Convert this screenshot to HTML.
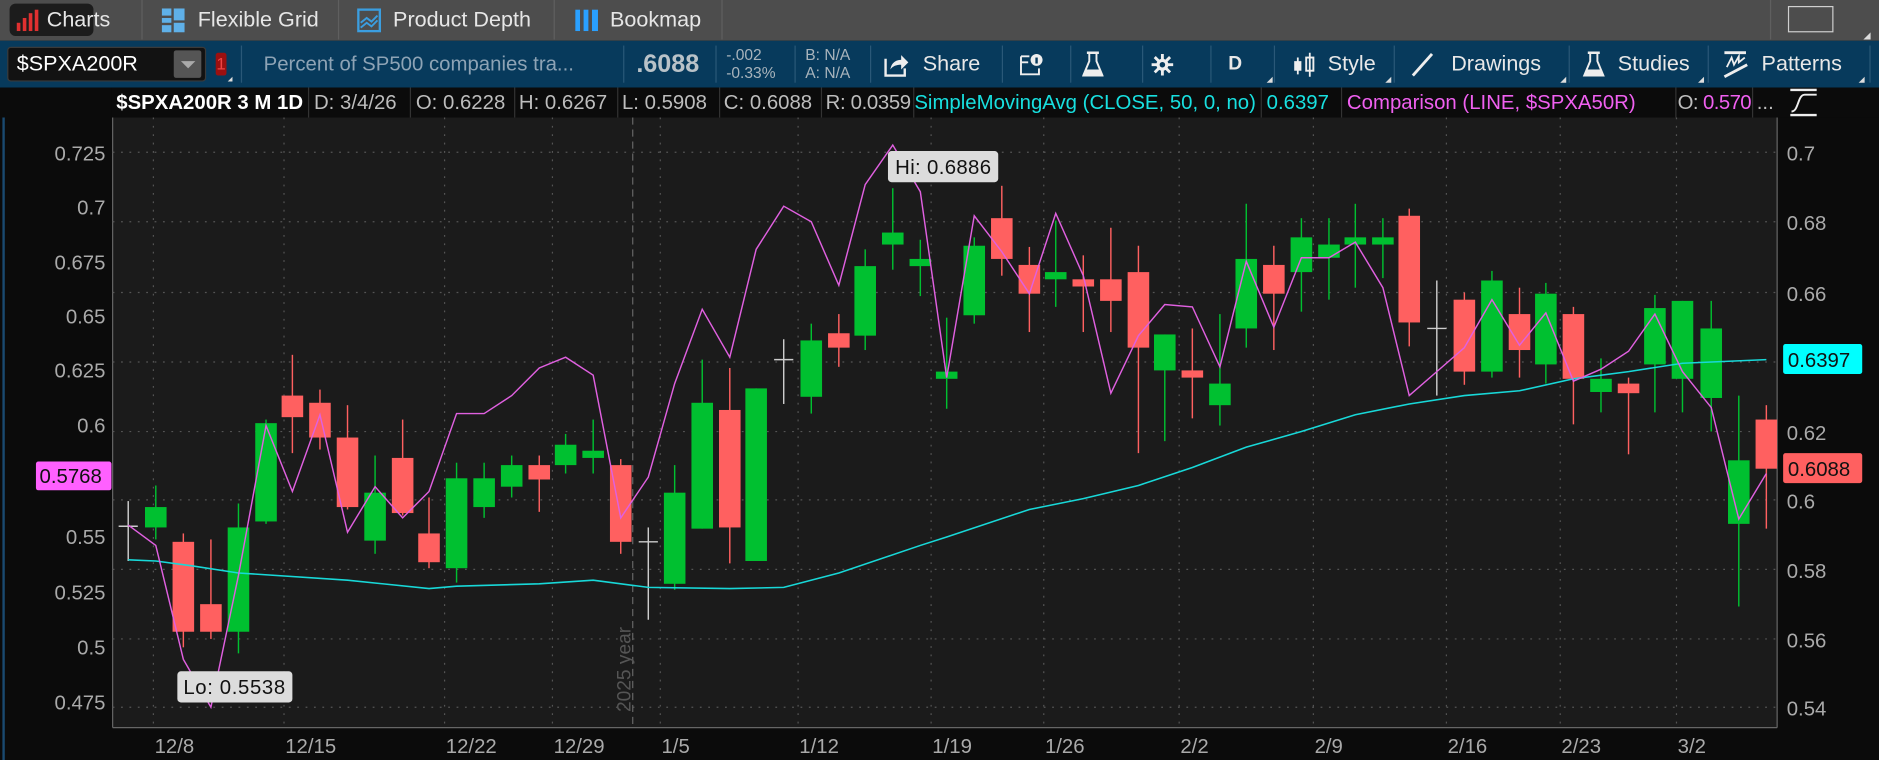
<!DOCTYPE html>
<html><head><meta charset="utf-8">
<style>
html,body{margin:0;padding:0;background:#0b0b0b;overflow:hidden;width:1879px;height:760px}
#w{position:absolute;left:0;top:0;width:1568px;height:634px;transform-origin:0 0;transform:scale(1.19834,1.19874);font-family:"Liberation Sans",sans-serif;}
.a{position:absolute;white-space:nowrap}
#tabs{position:absolute;left:0;top:0;width:1568px;height:34px;background:#4d4d4d}
.tab{position:absolute;top:0;height:33px;line-height:33px;color:#e6e6e6;font-size:18px}
.sep{position:absolute;top:0;width:1px;height:33px;background:#5f5f5f}
#tb{position:absolute;left:0;top:34px;width:1568px;height:39px;background:#073a5c}
.ts{position:absolute;top:4px;width:1px;height:31px;background:#2a5878}
.tt{position:absolute;top:0;height:39px;line-height:39px;color:#e8e8e8;font-size:18px;white-space:nowrap}
.corner{position:absolute;width:0;height:0;border-left:6px solid transparent;border-bottom:6px solid #ddd}
#info{position:absolute;left:93px;top:73px;width:1475px;height:25px;background:#0b0b0b;font-size:17px;line-height:25px}
.ic{position:absolute;top:0;height:25px;color:#bdbdbd;border-right:1px solid #333;padding-left:4px;white-space:nowrap;overflow:hidden}
</style></head><body>
<div id="w">
<div id="tabs">
  <div class="a" style="left:8px;top:3px;width:70px;height:27px;background:#1c1c1c;border-radius:5px"></div>
  <svg class="a" style="left:13px;top:8px" width="22" height="18"><rect x="1" y="11" width="3" height="7" fill="#e03030"/><rect x="6" y="7" width="3" height="11" fill="#e03030"/><rect x="11" y="3" width="3" height="15" fill="#e03030"/><rect x="16" y="0" width="3" height="18" fill="#e03030"/></svg>
  <div class="tab" style="left:39px">Charts</div>
  <div class="sep" style="left:118px"></div>
  <svg class="a" style="left:135px;top:7px" width="20" height="20"><rect x="0" y="0" width="8" height="6" fill="#5fb0e8"/><rect x="0" y="8" width="8" height="4" fill="#5fb0e8"/><rect x="0" y="14" width="8" height="6" fill="#5fb0e8"/><rect x="10" y="0" width="9" height="10" fill="#5fb0e8"/><rect x="10" y="12" width="9" height="8" fill="#5fb0e8"/></svg>
  <div class="tab" style="left:165px">Flexible Grid</div>
  <div class="sep" style="left:282px"></div>
  <svg class="a" style="left:298px;top:7px" width="20" height="20"><rect x="1" y="1" width="18" height="18" fill="none" stroke="#3b9ee0" stroke-width="2"/><path d="M3 12 L8 8 L12 11 L17 6 M3 16 L8 12 L12 15 L17 10" stroke="#3b9ee0" stroke-width="1.6" fill="none"/></svg>
  <div class="tab" style="left:328px">Product Depth</div>
  <div class="sep" style="left:462px"></div>
  <svg class="a" style="left:480px;top:8px" width="20" height="18"><rect x="0" y="0" width="4" height="18" fill="#2aa0ff"/><rect x="7" y="0" width="4" height="18" fill="#2aa0ff"/><rect x="14" y="0" width="5" height="18" fill="#2aa0ff"/></svg>
  <div class="tab" style="left:509px">Bookmap</div>
  <div class="sep" style="left:602px"></div>
  <div class="sep" style="left:1477px"></div>
  <div class="a" style="left:1492px;top:5px;width:38px;height:22px;border:1px solid #cfcfcf;box-sizing:border-box"></div>
  <div class="corner" style="left:1555px;top:27px"></div>
</div>
<div id="tb">
  <div class="a" style="left:6px;top:5px;width:166px;height:29px;background:#121212;border:1px solid #3a3a3a;border-radius:3px;box-sizing:border-box"></div>
  <div class="a" style="left:14px;top:5px;height:29px;line-height:29px;color:#fff;font-size:18px">$SPXA200R</div>
  <div class="a" style="left:145px;top:8px;width:23px;height:23px;background:#555;border-radius:2px"></div>
  <div class="a" style="left:151px;top:17px;width:0;height:0;border-left:6px solid transparent;border-right:6px solid transparent;border-top:6px solid #aaa"></div>
  <div class="a" style="left:180px;top:10px;width:9px;height:19px;background:#9b1010;border-radius:2px;color:#e44;font-size:14px;line-height:19px;text-align:center">1</div>
  <div class="corner" style="left:190px;top:30px;border-bottom-width:4px;border-left-width:4px"></div>
  <div class="ts" style="left:201px"></div>
  <div class="tt" style="left:220px;color:#8da3b5;font-size:17px">Percent of SP500 companies tra...</div>
  <div class="ts" style="left:520px"></div>
  <div class="tt" style="left:531px;color:#b9c2c8;font-size:21px;font-weight:bold">.6088</div>
  <div class="ts" style="left:597px"></div>
  <div class="a" style="left:606px;top:4px;color:#a9b4bc;font-size:13px;line-height:15px">-.002<br>-0.33%</div>
  <div class="ts" style="left:663px"></div>
  <div class="a" style="left:672px;top:4px;color:#a9b4bc;font-size:13px;line-height:15px">B: N/A<br>A: N/A</div>
  <div class="ts" style="left:726px"></div>
  <svg class="a" style="left:737px;top:9px" width="22" height="22"><path d="M2 6 V20 H18 V14" stroke="#eee" stroke-width="2" fill="none"/><path d="M6 15 C7 9 11 7 15 7 V3 L21 9 L15 15 V11 C11 11 8 12 6 15 Z" fill="#eee"/></svg>
  <div class="tt" style="left:770px">Share</div>
  <div class="ts" style="left:836px"></div>
  <svg class="a" style="left:850px;top:10px" width="22" height="20"><path d="M2 3 H9 M2 3 V18 H17 V13" stroke="#eee" stroke-width="1.6" fill="none"/><path d="M2 8 H8" stroke="#eee" stroke-width="1.6"/><circle cx="15" cy="6" r="5" fill="#eee"/><rect x="14" y="4" width="2" height="5" fill="#073a5c"/></svg>
  <div class="ts" style="left:893px"></div>
  <svg class="a" style="left:903px;top:8px" width="18" height="24"><path d="M6 2 V9 L1 21 H17 L12 9 V2" stroke="#eee" stroke-width="1.6" fill="none"/><path d="M4 2 H14" stroke="#eee" stroke-width="2"/><path d="M3 16 L15 16 L17 21 L1 21 Z" fill="#eee"/></svg>
  <div class="ts" style="left:953px"></div>
  <svg class="a" style="left:960px;top:10px" width="20" height="20" viewBox="0 0 20 20"><g stroke="#eee" stroke-width="2.4"><path d="M10 1 V19 M1 10 H19 M3.6 3.6 L16.4 16.4 M16.4 3.6 L3.6 16.4"/></g><circle cx="10" cy="10" r="5" fill="#eee"/><circle cx="10" cy="10" r="2.3" fill="#073a5c"/></svg>
  <div class="ts" style="left:1010px"></div>
  <div class="tt" style="left:1025px;font-weight:bold;font-size:16px">D</div>
  <div class="corner" style="left:1057px;top:30px;border-bottom-width:5px;border-left-width:5px"></div>
  <div class="ts" style="left:1063px"></div>
  <svg class="a" style="left:1078px;top:8px" width="22" height="24"><path d="M5 6 V20 M15 2 V22" stroke="#eee" stroke-width="1.5"/><rect x="2" y="9" width="6" height="8" fill="#eee"/><rect x="12" y="6" width="6" height="11" fill="none" stroke="#eee" stroke-width="1.6"/></svg>
  <div class="tt" style="left:1108px">Style</div>
  <div class="corner" style="left:1156px;top:30px;border-bottom-width:5px;border-left-width:5px"></div>
  <div class="ts" style="left:1163px"></div>
  <svg class="a" style="left:1176px;top:9px" width="22" height="22"><path d="M3 20 L19 2" stroke="#eee" stroke-width="2.4"/></svg>
  <div class="tt" style="left:1211px">Drawings</div>
  <div class="corner" style="left:1302px;top:30px;border-bottom-width:5px;border-left-width:5px"></div>
  <div class="ts" style="left:1309px"></div>
  <svg class="a" style="left:1320px;top:8px" width="20" height="24"><path d="M7 2 V9 L2 21 H18 L13 9 V2" stroke="#eee" stroke-width="1.6" fill="none"/><path d="M5 2 H15" stroke="#eee" stroke-width="2"/><path d="M4 16 L16 16 L18 21 L2 21 Z" fill="#eee"/></svg>
  <div class="tt" style="left:1350px">Studies</div>
  <div class="corner" style="left:1417px;top:30px;border-bottom-width:5px;border-left-width:5px"></div>
  <div class="ts" style="left:1425px"></div>
  <svg class="a" style="left:1437px;top:8px" width="24" height="24"><path d="M2 2 H20" stroke="#eee" stroke-width="2.4"/><path d="M4 14 L8 6 L10 12 L14 5 L14 10 L19 6" stroke="#eee" stroke-width="1.5" fill="none"/><path d="M2 22 L21 12" stroke="#eee" stroke-width="2.4"/></svg>
  <div class="tt" style="left:1470px">Patterns</div>
  <div class="corner" style="left:1551px;top:30px;border-bottom-width:5px;border-left-width:5px"></div>
  <div class="ts" style="left:1560px"></div>
</div>
<div id="info">
  <div class="ic" style="left:0;width:160px;color:#fff;font-weight:bold">$SPXA200R 3 M 1D</div>
  <div class="ic" style="left:165px;width:80px">D: 3/4/26</div>
  <div class="ic" style="left:250px;width:82px">O: 0.6228</div>
  <div class="ic" style="left:336px;width:82px">H: 0.6267</div>
  <div class="ic" style="left:422px;width:81px">L: 0.5908</div>
  <div class="ic" style="left:507px;width:81px">C: 0.6088</div>
  <div class="ic" style="left:592px;width:73px;letter-spacing:-0.3px">R: 0.0359</div>
  <div class="ic" style="left:666px;width:289px;color:#18e0e0">SimpleMovingAvg (CLOSE, 50, 0, no)</div>
  <div class="ic" style="left:960px;width:62px;color:#18e0e0">0.6397</div>
  <div class="ic" style="left:1027px;width:274px;color:#f060f0">Comparison (LINE, $SPXA50R)</div>
  <div class="ic" style="left:1303px;width:62px;letter-spacing:-0.5px">O: <span style="color:#f060f0">0.5709</span></div>
  <div class="ic" style="left:1369px;width:20px;border:none">...</div>
  <svg class="a" style="left:1398px;top:0" width="30" height="25"><path d="M3 2 H25 M3 23 H25" stroke="#eee" stroke-width="2"/><path d="M4 20 C10 20 9 6 15 6 C20 6 20 6 25 6" stroke="#eee" stroke-width="1.6" fill="none"/></svg>
</div>
<svg class="a" style="left:0;top:98px" width="1568" height="536" viewBox="0 98 1568 536" font-family="Liberation Sans, sans-serif">
  <rect x="0" y="98" width="1568" height="536" fill="#0b0b0b"/>
  <rect x="94" y="98" width="1389" height="509" fill="#1b1b1b"/>
  <line x1="94" y1="98" x2="94" y2="607" stroke="#666"/>
  <line x1="1483" y1="98" x2="1483" y2="607" stroke="#666"/>
  <line x1="94" y1="607" x2="1483" y2="607" stroke="#666"/>
  <line x1="3" y1="98" x2="3" y2="634" stroke="#1a4a70" stroke-width="2"/>
  <g stroke="#555" stroke-dasharray="1.5 5.5">
    <line x1="94" x2="1483" y1="127" y2="127"/><line x1="94" x2="1483" y1="185" y2="185"/><line x1="94" x2="1483" y1="244" y2="244"/><line x1="94" x2="1483" y1="302" y2="302"/><line x1="94" x2="1483" y1="360" y2="360"/><line x1="94" x2="1483" y1="417" y2="417"/><line x1="94" x2="1483" y1="475" y2="475"/><line x1="94" x2="1483" y1="533" y2="533"/><line x1="94" x2="1483" y1="590" y2="590"/>
    <line y1="98" y2="607" x1="128" x2="128"/><line y1="98" y2="607" x1="237" x2="237"/><line y1="98" y2="607" x1="371" x2="371"/><line y1="98" y2="607" x1="461" x2="461"/><line y1="98" y2="607" x1="551" x2="551"/><line y1="98" y2="607" x1="666" x2="666"/><line y1="98" y2="607" x1="777" x2="777"/><line y1="98" y2="607" x1="871" x2="871"/><line y1="98" y2="607" x1="984" x2="984"/><line y1="98" y2="607" x1="1096" x2="1096"/><line y1="98" y2="607" x1="1207" x2="1207"/><line y1="98" y2="607" x1="1302" x2="1302"/><line y1="98" y2="607" x1="1399" x2="1399"/>
  </g>
  <line x1="528" y1="98" x2="528" y2="607" stroke="#666" stroke-dasharray="6 4"/>
  <text transform="translate(526,594) rotate(-90)" fill="#555" font-size="16">2025 year</text>
  <g fill="#aaa" font-size="17" text-anchor="end">
    <text x="88" y="134">0.725</text><text x="88" y="179">0.7</text><text x="88" y="225">0.675</text><text x="88" y="270">0.65</text><text x="88" y="315">0.625</text><text x="88" y="361">0.6</text><text x="88" y="454">0.55</text><text x="88" y="500">0.525</text><text x="88" y="546">0.5</text><text x="88" y="592">0.475</text>
  </g>
  <g fill="#aaa" font-size="17">
    <text x="1491" y="134">0.7</text><text x="1491" y="192">0.68</text><text x="1491" y="251">0.66</text><text x="1491" y="367">0.62</text><text x="1491" y="424">0.6</text><text x="1491" y="482">0.58</text><text x="1491" y="540">0.56</text><text x="1491" y="597">0.54</text>
  </g>
  <g fill="#aaa" font-size="17">
    <text x="129" y="628">12/8</text><text x="238" y="628">12/15</text><text x="372" y="628">12/22</text><text x="462" y="628">12/29</text><text x="552" y="628">1/5</text><text x="667" y="628">1/12</text><text x="778" y="628">1/19</text><text x="872" y="628">1/26</text><text x="985" y="628">2/2</text><text x="1097" y="628">2/9</text><text x="1208" y="628">2/16</text><text x="1303" y="628">2/23</text><text x="1400" y="628">3/2</text>
  </g>
  <g stroke-width="1.2">
  <g stroke="#ccc"><line x1="107" x2="107" y1="418" y2="468"/><line x1="99" x2="115" y1="439" y2="439"/><line x1="541" x2="541" y1="440" y2="517"/><line x1="533" x2="549" y1="452" y2="452"/><line x1="654" x2="654" y1="283" y2="337"/><line x1="646" x2="662" y1="300" y2="300"/><line x1="1199" x2="1199" y1="234" y2="330"/><line x1="1191" x2="1207" y1="274" y2="274"/></g>
  <g stroke="#00c030">
   <line x1="130" x2="130" y1="405" y2="450"/><line x1="199" x2="199" y1="420" y2="545"/><line x1="222" x2="222" y1="350" y2="437"/><line x1="313" x2="313" y1="380" y2="462"/><line x1="381" x2="381" y1="386" y2="486"/><line x1="404" x2="404" y1="386" y2="432"/><line x1="427" x2="427" y1="380" y2="415"/><line x1="472" x2="472" y1="362" y2="395"/><line x1="495" x2="495" y1="350" y2="395"/><line x1="563" x2="563" y1="388" y2="492"/><line x1="586" x2="586" y1="300" y2="441"/><line x1="631" x2="631" y1="324" y2="468"/><line x1="677" x2="677" y1="270" y2="345"/><line x1="722" x2="722" y1="208" y2="292"/><line x1="745" x2="745" y1="157" y2="225"/><line x1="768" x2="768" y1="200" y2="247"/><line x1="790" x2="790" y1="265" y2="341"/><line x1="813" x2="813" y1="198" y2="270"/><line x1="881" x2="881" y1="184" y2="256"/><line x1="972" x2="972" y1="279" y2="368"/><line x1="1018" x2="1018" y1="262" y2="355"/><line x1="1040" x2="1040" y1="170" y2="290"/><line x1="1086" x2="1086" y1="182" y2="260"/><line x1="1109" x2="1109" y1="182" y2="250"/><line x1="1131" x2="1131" y1="170" y2="240"/><line x1="1154" x2="1154" y1="182" y2="232"/><line x1="1245" x2="1245" y1="226" y2="315"/><line x1="1290" x2="1290" y1="236" y2="320"/><line x1="1336" x2="1336" y1="299" y2="344"/><line x1="1381" x2="1381" y1="246" y2="344"/><line x1="1404" x2="1404" y1="251" y2="344"/><line x1="1428" x2="1428" y1="251" y2="360"/><line x1="1451" x2="1451" y1="330" y2="506"/>
  </g>
  <g stroke="#ff6060">
   <line x1="153" x2="153" y1="445" y2="540"/><line x1="176" x2="176" y1="450" y2="533"/><line x1="244" x2="244" y1="296" y2="378"/><line x1="267" x2="267" y1="325" y2="375"/><line x1="290" x2="290" y1="338" y2="425"/><line x1="336" x2="336" y1="350" y2="430"/><line x1="358" x2="358" y1="415" y2="474"/><line x1="450" x2="450" y1="380" y2="427"/><line x1="518" x2="518" y1="383" y2="462"/><line x1="609" x2="609" y1="307" y2="470"/><line x1="700" x2="700" y1="262" y2="306"/><line x1="836" x2="836" y1="155" y2="230"/><line x1="859" x2="859" y1="206" y2="277"/><line x1="904" x2="904" y1="213" y2="277"/><line x1="927" x2="927" y1="190" y2="277"/><line x1="950" x2="950" y1="205" y2="378"/><line x1="995" x2="995" y1="274" y2="349"/><line x1="1063" x2="1063" y1="205" y2="292"/><line x1="1176" x2="1176" y1="174" y2="289"/><line x1="1222" x2="1222" y1="244" y2="321"/><line x1="1268" x2="1268" y1="240" y2="315"/><line x1="1313" x2="1313" y1="256" y2="354"/><line x1="1359" x2="1359" y1="315" y2="379"/><line x1="1474" x2="1474" y1="338" y2="441"/>
  </g>
  </g>
  <g fill="#00c030">
   <rect x="121" y="423" width="18" height="17"/><rect x="190" y="440" width="18" height="87"/><rect x="213" y="353" width="18" height="82"/><rect x="304" y="411" width="18" height="40"/><rect x="372" y="399" width="18" height="75"/><rect x="395" y="399" width="18" height="24"/><rect x="418" y="388" width="18" height="18"/><rect x="463" y="371" width="18" height="17"/><rect x="486" y="376" width="18" height="6"/><rect x="554" y="411" width="18" height="76"/><rect x="577" y="336" width="18" height="105"/><rect x="622" y="324" width="18" height="144"/><rect x="668" y="284" width="18" height="47"/><rect x="713" y="222" width="18" height="58"/><rect x="736" y="194" width="18" height="10"/><rect x="759" y="216" width="18" height="6"/><rect x="781" y="310" width="18" height="6"/><rect x="804" y="205" width="18" height="58"/><rect x="872" y="227" width="18" height="6"/><rect x="963" y="279" width="18" height="30"/><rect x="1009" y="320" width="18" height="18"/><rect x="1031" y="216" width="18" height="58"/><rect x="1077" y="198" width="18" height="29"/><rect x="1100" y="204" width="18" height="11"/><rect x="1122" y="198" width="18" height="6"/><rect x="1145" y="198" width="18" height="6"/><rect x="1236" y="234" width="18" height="76"/><rect x="1281" y="245" width="18" height="59"/><rect x="1327" y="316" width="18" height="11"/><rect x="1372" y="257" width="18" height="47"/><rect x="1395" y="251" width="18" height="65"/><rect x="1419" y="274" width="18" height="58"/><rect x="1442" y="384" width="18" height="53"/>
  </g>
  <g fill="#ff6060">
   <rect x="144" y="452" width="18" height="75"/><rect x="167" y="504" width="18" height="23"/><rect x="235" y="330" width="18" height="18"/><rect x="258" y="336" width="18" height="29"/><rect x="281" y="365" width="18" height="58"/><rect x="327" y="382" width="18" height="46"/><rect x="349" y="445" width="18" height="24"/><rect x="441" y="388" width="18" height="12"/><rect x="509" y="388" width="18" height="64"/><rect x="600" y="342" width="18" height="98"/><rect x="691" y="278" width="18" height="12"/><rect x="827" y="182" width="18" height="34"/><rect x="850" y="221" width="18" height="24"/><rect x="895" y="233" width="18" height="6"/><rect x="918" y="233" width="18" height="18"/><rect x="941" y="227" width="18" height="63"/><rect x="986" y="309" width="18" height="6"/><rect x="1054" y="221" width="18" height="24"/><rect x="1167" y="180" width="18" height="89"/><rect x="1213" y="250" width="18" height="60"/><rect x="1259" y="262" width="18" height="30"/><rect x="1304" y="262" width="18" height="54"/><rect x="1350" y="320" width="18" height="8"/><rect x="1465" y="350" width="18" height="41"/>
  </g>
  <polyline fill="none" stroke="#18d8d8" stroke-width="1.3" points="107,467 130,468 160,472 199,478 290,484 358,491 381,489 450,487 495,484 541,490 609,491 654,490 700,478 768,455 790,448 859,425 904,416 950,405 995,390 1040,373 1086,360 1131,346 1176,337 1222,330 1268,326 1313,316 1359,310 1404,303 1474,300"/>
  <polyline fill="none" stroke="#e060e0" stroke-width="1.2" points="107,438 130,455 153,550 176,590 199,480 222,355 244,410 267,346 290,444 313,406 336,432 358,410 381,345 404,345 427,330 450,307 472,298 495,313 518,432 541,398 563,320 586,258 609,298 631,208 654,172 677,185 700,238 722,154 745,121 768,160 790,315 813,180 836,210 859,245 881,178 904,230 927,328 950,280 972,254 995,256 1018,306 1040,218 1063,273 1086,215 1109,215 1131,202 1154,240 1176,330 1199,310 1222,290 1245,250 1268,288 1290,261 1313,318 1336,308 1359,293 1381,262 1404,310 1428,340 1451,433 1474,395"/>
  <rect x="741" y="126" width="92" height="26" rx="3" fill="#dcdcdc"/>
  <text x="747" y="145" font-size="17" fill="#111" textLength="80">Hi: 0.6886</text>
  <rect x="148" y="560" width="96" height="26" rx="3" fill="#dcdcdc"/>
  <text x="153" y="579" font-size="17" fill="#111" textLength="85">Lo: 0.5538</text>
  <rect x="30" y="385" width="63" height="24" rx="2" fill="#ff60ff"/>
  <text x="33" y="403" font-size="17" fill="#111">0.5768</text>
  <rect x="1488" y="287" width="66" height="25" rx="2" fill="#00ffff"/>
  <text x="1492" y="306" font-size="17" fill="#111">0.6397</text>
  <rect x="1488" y="378" width="66" height="25" rx="2" fill="#ff6060"/>
  <text x="1492" y="397" font-size="17" fill="#111">0.6088</text>
</svg>
</div>
</body></html>
